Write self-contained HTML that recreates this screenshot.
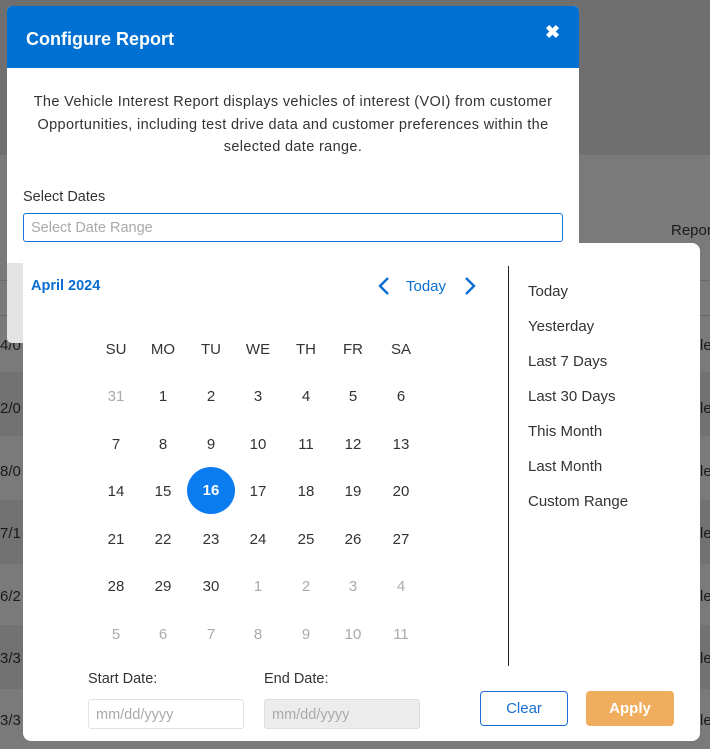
<!DOCTYPE html>
<html><head><style>
*{box-sizing:border-box;margin:0;padding:0}
body{width:710px;height:749px;overflow:hidden;background:#6f6f6f;font-family:"Liberation Sans",sans-serif;position:relative}
.abs{position:absolute}
.bgtext{position:absolute;color:#1a1a1a;font-size:15px}
.cal div{position:absolute;width:40px;text-align:center;font-size:15px;color:#333}
.g{color:#aaa!important}
.pre{position:absolute;left:528px;font-size:15px;color:#333}
</style></head><body>
<div class="abs" style="left:0;top:155px;width:710px;height:594px;background:#7a7a7a"></div>
<div class="abs" style="left:0;top:280px;width:710px;height:1px;background:#6a6a6a"></div>
<div class="abs" style="left:0;top:315px;width:710px;height:1px;background:#666"></div>
<div class="abs" style="left:0;top:372px;width:710px;height:64px;background:#727272"></div>
<div class="abs" style="left:0;top:500px;width:710px;height:64px;background:#727272"></div>
<div class="abs" style="left:0;top:625px;width:710px;height:64px;background:#727272"></div>
<div class="bgtext" style="left:671px;top:222px">Repor</div>
<div class="bgtext" style="left:0;top:337px">4/0</div>
<div class="bgtext" style="left:0;top:400px">2/0</div>
<div class="bgtext" style="left:0;top:463px">8/0</div>
<div class="bgtext" style="left:0;top:525px">7/1</div>
<div class="bgtext" style="left:0;top:588px">6/2</div>
<div class="bgtext" style="left:0;top:650px">3/3</div>
<div class="bgtext" style="left:0;top:712px">3/3</div>
<div class="bgtext" style="left:700px;top:337px">le</div>
<div class="bgtext" style="left:700px;top:400px">le</div>
<div class="bgtext" style="left:700px;top:463px">le</div>
<div class="bgtext" style="left:700px;top:525px">le</div>
<div class="bgtext" style="left:700px;top:588px">le</div>
<div class="bgtext" style="left:700px;top:650px">le</div>
<div class="bgtext" style="left:700px;top:712px">le</div>

<!-- modal -->
<div class="abs" style="left:7px;top:6px;width:572px;height:337px;background:#fff;border-radius:5px;overflow:hidden">
  <div style="height:62px;background:#0070d2;color:#fff;font-weight:bold;font-size:18px;padding:23px 0 0 19px">Configure Report</div>
  <div class="abs" style="left:538px;top:16px;color:#fff;font-size:18px;font-weight:bold">✖</div>
  <div style="padding:23px 0 0;text-align:center;font-size:14.5px;line-height:22.5px;color:#333;letter-spacing:0.35px;white-space:nowrap">The Vehicle Interest Report displays vehicles of interest (VOI) from customer<br>Opportunities, including test drive data and customer preferences within the<br>selected date range.</div>
  <div class="abs" style="left:16px;top:183px;font-size:14.5px;color:#333">Select Dates</div>
  <div class="abs" style="left:16px;top:207px;width:540px;height:29px;border:1px solid #1a73d9;border-radius:3px;font-size:14.5px;color:#aaa;padding:6px 7px">Select Date Range</div>
  <div class="abs" style="left:0;top:257px;width:16px;height:80px;background:#e3e3e3"></div>
</div>

<!-- popup -->
<div class="abs" style="left:23px;top:243px;width:677px;height:498px;background:#fff;border-radius:8px">
  <div class="abs" style="left:8px;top:35px;color:#0a6ed1;font-weight:bold;font-size:14.5px">April 2024</div>
  <svg class="abs" style="left:354px;top:33px" width="14" height="20"><path d="M11 2 L3 10 L11 18" stroke="#0a6ed1" stroke-width="2.4" fill="none"/></svg>
  <div class="abs" style="left:383px;top:35px;color:#0a6ed1;font-size:15px">Today</div>
  <svg class="abs" style="left:440px;top:33px" width="14" height="20"><path d="M3 2 L11 10 L3 18" stroke="#0a6ed1" stroke-width="2.4" fill="none"/></svg>
  <div class="abs" style="left:485px;top:23px;width:1px;height:400px;background:#222"></div>
</div>
<div class="cal">
<div style="left:96px;top:341px">SU</div><div style="left:143px;top:341px">MO</div><div style="left:191px;top:341px">TU</div><div style="left:238px;top:341px">WE</div><div style="left:286px;top:341px">TH</div><div style="left:333px;top:341px">FR</div><div style="left:381px;top:341px">SA</div>
<div class="g" style="left:96px;top:388px">31</div><div style="left:143px;top:388px">1</div><div style="left:191px;top:388px">2</div><div style="left:238px;top:388px">3</div><div style="left:286px;top:388px">4</div><div style="left:333px;top:388px">5</div><div style="left:381px;top:388px">6</div>
<div style="left:96px;top:436px">7</div><div style="left:143px;top:436px">8</div><div style="left:191px;top:436px">9</div><div style="left:238px;top:436px">10</div><div style="left:286px;top:436px">11</div><div style="left:333px;top:436px">12</div><div style="left:381px;top:436px">13</div>
<div style="left:96px;top:483px">14</div><div style="left:143px;top:483px">15</div>
<div style="left:187px;top:467px;width:48px;height:47px;border-radius:50%;background:#0a7cf0;color:#fff;font-weight:bold;line-height:47px">16</div>
<div style="left:238px;top:483px">17</div><div style="left:286px;top:483px">18</div><div style="left:333px;top:483px">19</div><div style="left:381px;top:483px">20</div>
<div style="left:96px;top:531px">21</div><div style="left:143px;top:531px">22</div><div style="left:191px;top:531px">23</div><div style="left:238px;top:531px">24</div><div style="left:286px;top:531px">25</div><div style="left:333px;top:531px">26</div><div style="left:381px;top:531px">27</div>
<div style="left:96px;top:578px">28</div><div style="left:143px;top:578px">29</div><div style="left:191px;top:578px">30</div><div class="g" style="left:238px;top:578px">1</div><div class="g" style="left:286px;top:578px">2</div><div class="g" style="left:333px;top:578px">3</div><div class="g" style="left:381px;top:578px">4</div>
<div class="g" style="left:96px;top:626px">5</div><div class="g" style="left:143px;top:626px">6</div><div class="g" style="left:191px;top:626px">7</div><div class="g" style="left:238px;top:626px">8</div><div class="g" style="left:286px;top:626px">9</div><div class="g" style="left:333px;top:626px">10</div><div class="g" style="left:381px;top:626px">11</div>
</div>
<div class="pre" style="top:283px">Today</div>
<div class="pre" style="top:318px">Yesterday</div>
<div class="pre" style="top:353px">Last 7 Days</div>
<div class="pre" style="top:388px">Last 30 Days</div>
<div class="pre" style="top:423px">This Month</div>
<div class="pre" style="top:458px">Last Month</div>
<div class="pre" style="top:493px">Custom Range</div>

<div class="abs" style="left:88px;top:671px;font-size:14.5px;color:#333">Start Date:</div>
<div class="abs" style="left:264px;top:671px;font-size:14.5px;color:#333">End Date:</div>
<div class="abs" style="left:88px;top:699px;width:156px;height:30px;border:1px solid #e2e2e2;border-radius:3px;color:#aaa;font-size:14.5px;padding:7px 7px">mm/dd/yyyy</div>
<div class="abs" style="left:264px;top:699px;width:156px;height:30px;border:1px solid #ddd;background:#ececec;border-radius:3px;color:#aaa;font-size:14.5px;padding:7px 7px">mm/dd/yyyy</div>
<div class="abs" style="left:480px;top:691px;width:88px;height:35px;border:1px solid #1a6ed1;border-radius:4px;color:#1a6ed1;font-size:15px;text-align:center;line-height:34px">Clear</div>
<div class="abs" style="left:586px;top:691px;width:88px;height:35px;background:#f0ad5e;border-radius:4px;color:#fff;font-size:15px;font-weight:bold;text-align:center;line-height:36px">Apply</div>
</body></html>
